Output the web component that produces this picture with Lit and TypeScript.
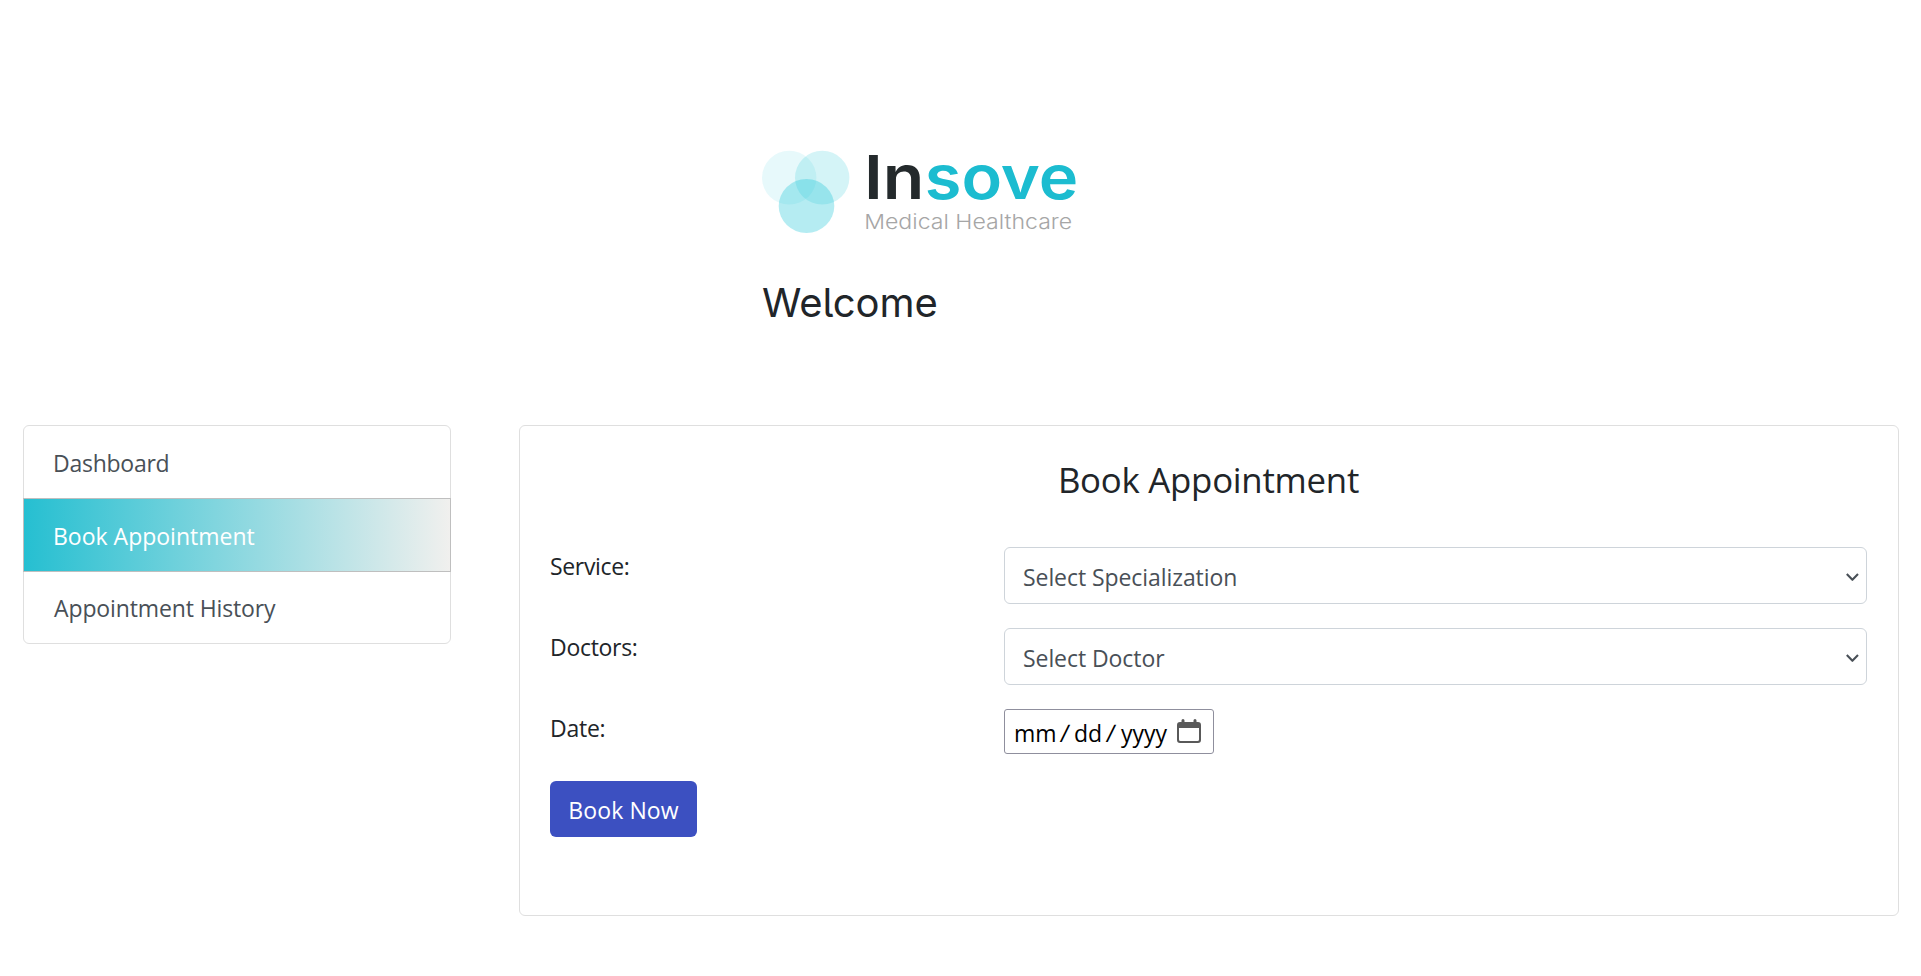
import { LitElement, html, css, svg } from "lit";
import { customElement, property } from "lit/decorators.js";
import { classMap } from "lit/directives/class-map.js";

@customElement("brand-logo")
class BrandLogo extends LitElement {
  static styles = css`
    :host { display: block; height: 84px; }
    svg { display: block; overflow: visible; }
    text { font-family: Inter, "Open Sans", sans-serif; }
    .name { font-size: 61px; font-weight: 600; }
    .dark { fill: #242a2c; }
    .teal { fill: #1cbcd0; }
    .tagline { font-size: 20.3px; font-weight: 350; fill: #a6a6a6; }
  `;
  render() {
    return html`<svg width="320" height="84" viewBox="762 150 320 84">
      ${svg`
        <ellipse cx="789.2" cy="177.7" rx="27.2" ry="26.9" fill="#12c2d8" fill-opacity="0.1" />
        <ellipse cx="822.2" cy="177.7" rx="27.2" ry="26.9" fill="#12c2d4" fill-opacity="0.18" />
        <ellipse cx="806.5" cy="206" rx="27.8" ry="27" fill="#10c2d6" fill-opacity="0.31" />
        <text class="name dark" x="864" y="199" textLength="60.4" lengthAdjust="spacingAndGlyphs">In</text>
        <text class="name teal" x="924.8" y="199" textLength="153.5" lengthAdjust="spacingAndGlyphs">sove</text>
        <text class="tagline" x="864.2" y="229" textLength="208" lengthAdjust="spacingAndGlyphs">Medical Healthcare</text>
      `}
    </svg>`;
  }
}

@customElement("side-menu")
class SideMenu extends LitElement {
  @property() active = "book";
  static styles = css`
    :host { display: block; box-sizing: border-box; width: 428px; height: 219px; }
    nav { border: 1px solid #dfdfdf; border-radius: 6px; box-sizing: border-box; height: 219px; }
    .item {
      display: block; box-sizing: border-box; height: 72px; padding: 19px 28px 0 29px;
      line-height: 36px; color: #495057; text-decoration: none;
    }
    .dashboard { letter-spacing: -0.25px; }
    .history { letter-spacing: -0.12px; padding-top: 18px; padding-left: 30px; }
    .active {
      height: 74px; margin: 0 -1px; padding-left: 29px; padding-top: 19px;
      border: 1px solid #bfbfbf; color: #fff;
      background: linear-gradient(to right, #25bfd1, #f1f0ee) border-box;
    }
  `;
  render() {
    const items = [
      { id: "dashboard", label: "Dashboard" },
      { id: "book", label: "Book Appointment" },
      { id: "history", label: "Appointment History" },
    ];
    return html`<nav>${items.map(
      (i) => html`<a class=${classMap({ item: true, [i.id]: true, active: i.id === this.active })}>${i.label}</a>`
    )}</nav>`;
  }
}

@customElement("select-field")
class SelectField extends LitElement {
  @property() label = "";
  static styles = css`
    :host {
      display: flex; justify-content: space-between; box-sizing: border-box; height: 57px;
      border: 1px solid #ced4da; border-radius: 6px; padding: 11px 7px 0 18px;
      line-height: 36px; letter-spacing: -0.07px; color: #495057; background: #fff;
    }
    svg { display: block; margin-top: 13px; }
  `;
  render() {
    return html`<span>${this.label}</span>
      <svg width="14" height="10" viewBox="0 0 14 10"><path d="M1.8 2.1 7.4 7.8 13 2.1" fill="none" stroke="#495057" stroke-width="2.1" stroke-linejoin="round" /></svg>`;
  }
}

@customElement("date-field")
class DateField extends LitElement {
  static styles = css`
    :host {
      display: grid; grid-template-columns: 46px 14px 32px 15px 56px 24px; box-sizing: border-box;
      width: 210px; height: 45px; padding: 5px 0 0 9px; border: 1px solid #8f8f9d; border-radius: 3px;
      line-height: 36px; color: #000; background: #fff;
    }
    .slash { font-size: 24px; transform: skewX(-7deg); transform-origin: 0 60%; }
    svg { display: block; margin-top: 4px; }
  `;
  render() {
    return html`<span>mm</span><span class="slash">/</span><span>dd</span><span class="slash">/</span><span>yyyy</span>
      <svg width="24" height="24" viewBox="0 0 24 24">
        <path fill="#595959" fill-rule="evenodd" d="M4.5 3V1.5a1.5 1.5 0 0 1 3 0V3h9V1.5a1.5 1.5 0 0 1 3 0V3H21a3 3 0 0 1 3 3v15a3 3 0 0 1-3 3H3a3 3 0 0 1-3-3V6a3 3 0 0 1 3-3zM2 9v11.5A1.5 1.5 0 0 0 3.5 22h17a1.5 1.5 0 0 0 1.5-1.5V9z" />
      </svg>`;
  }
}

@customElement("app-root")
class AppRoot extends LitElement {
  static styles = css`
    :host {
      display: block; box-sizing: border-box; width: 1921px; height: 976px; background: #fff;
      font-family: "Open Sans", "Noto Sans", sans-serif; font-size: 23px; color: #212529; overflow: hidden;
    }
    header { padding: 150px 0 0 762px; height: 425px; box-sizing: border-box; }
    h1 {
      margin: 44px 0 0; font: 370 40px/50px Inter, "Noto Sans", sans-serif;
      font-feature-settings: "cv05"; letter-spacing: -0.1px;
    }
    main { display: flex; align-items: flex-start; gap: 68px; padding-left: 23px; }
    .card {
      box-sizing: border-box; width: 1380px; height: 491px; padding: 32px 31px 0 30px;
      border: 1px solid #dfdfdf; border-radius: 6px;
    }
    h2 { margin: 0 0 46px; font-size: 34.8px; font-weight: 400; line-height: 43px; letter-spacing: -0.25px; text-align: center; }
    .row { display: grid; grid-template-columns: 454px 863px; margin-bottom: 24px; }
    .row.date { margin-bottom: 27px; }
    .label { line-height: 36px; padding-top: 1px; letter-spacing: -0.25px; }
    .service { letter-spacing: -0.35px; }
    .doctors { letter-spacing: -0.3px; }
    button {
      display: block; width: 147px; height: 56px; padding: 11px 0 9px; border: 0; border-radius: 6px;
      background: #3c50c1; color: #fff; font: inherit; line-height: 36px; letter-spacing: 0.1px;
    }
  `;
  render() {
    return html`
      <header><brand-logo></brand-logo><h1>Welcome</h1></header>
      <main>
        <side-menu active="book"></side-menu>
        <section class="card">
          <h2>Book Appointment</h2>
          <div class="row"><span class="label service">Service:</span><select-field label="Select Specialization"></select-field></div>
          <div class="row"><span class="label doctors">Doctors:</span><select-field label="Select Doctor"></select-field></div>
          <div class="row date"><span class="label">Date:</span><date-field></date-field></div>
          <button>Book Now</button>
        </section>
      </main>
    `;
  }
}
